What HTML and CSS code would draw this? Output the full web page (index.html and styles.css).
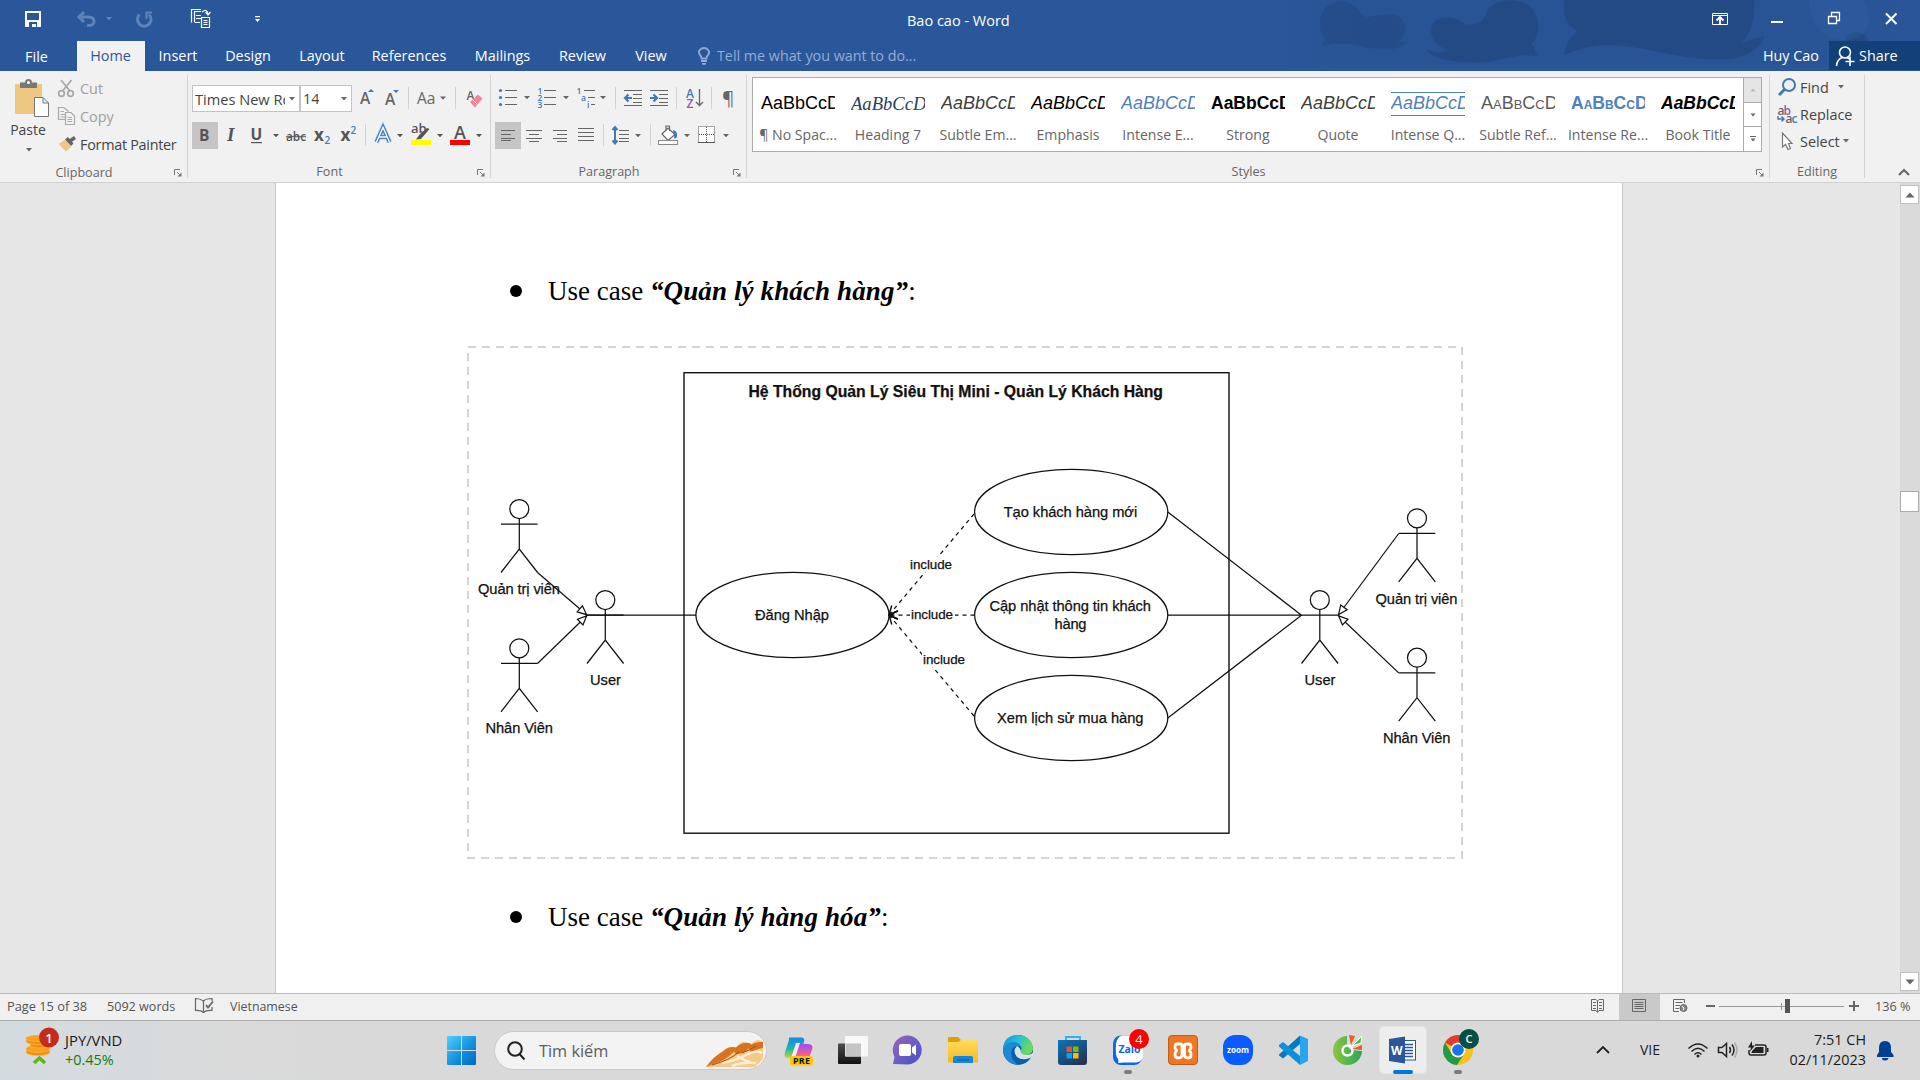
FILE: index.html
```html
<!DOCTYPE html>
<html lang="vi">
<head>
<meta charset="utf-8">
<title>Bao cao - Word</title>
<link rel="stylesheet" href="styles.css">
</head>
<body>
<header class="top">
  <svg class="pattern" viewBox="1280 0 640 65">
    <defs><linearGradient id="haze" x1="0" x2="1"><stop offset="0" stop-color="#254f8e" stop-opacity="0"/><stop offset=".12" stop-color="#254f8e" stop-opacity=".45"/><stop offset=".75" stop-color="#254f8e" stop-opacity=".4"/><stop offset="1" stop-color="#254f8e" stop-opacity=".15"/></linearGradient></defs>
    <rect x="1280" y="0" width="640" height="65" fill="url(#haze)"/>
    <g fill="#234a84">
      <path opacity=".7" d="M1320 48C1322 42 1326 41 1325 38C1317 30 1319 15 1325 8C1336-2 1352 0 1358 10C1362 14 1364 18 1369 17C1380 14 1402 10 1405 25C1406 34 1402 40 1398 42C1404 43 1408 40 1407 42C1400 51 1380 51 1360 46C1340 42 1328 43 1320 48Z"/>
      <path d="M1427 49C1434 53 1440 54 1447 50C1430 44 1430 30 1432 25C1436 15 1458 16 1466 25C1474 24 1482 25 1486 14C1492-3 1520-3 1531 7C1541 19 1540 34 1532 44L1538 57C1525 53 1512 57 1495 61C1470 65 1430 61 1427 49Z"/>
      <path d="M1564 0H1754C1756 20 1750 35 1741 43L1764 36C1764 44 1750 57 1730 59C1680 62 1650 46 1610 45C1590 45 1575 50 1564 55C1566 42 1571 37 1577 31C1562 22 1564 10 1564 0Z"/>
      <path d="M1845 41C1847 30 1866 29 1868 41Z"/>
    </g>
    <path d="M1809 0H1863C1876 20 1868 36 1850 40C1825 44 1808 22 1809 0Z" fill="#3261a5" opacity=".35"/>
  </svg>
  <div class="titlebar">
    <svg class="qat" viewBox="0 0 280 41">
      <path d="M25 11H41V27H25Z" fill="#fff"/><path d="M27 13H39V20H27ZM29 22H37V27H36V24H32V27H29Z" fill="#2a579a"/>
      <g fill="none" stroke="#5f82b8" stroke-width="3"><path d="M80 17H88Q94 17 94 21.5T87 25.500"/><path d="M84 12L79 17L84 22"/><path d="M139.500 14.500A6.800 6.800 0 1 0 149 14.500"/><path d="M152 12.500H146.500V19" stroke-width="2"/></g>
      <path d="M106 17H112L109 20.500Z" fill="#5f82b8"/>
      <g fill="none" stroke="#fff" stroke-width="1.200"><path d="M191.500 22.500V9.500H201M194.500 22V11.500H201M196 15.500H201M196 18.500H201M194.500 22.500H200M201.500 17.500H209.500V27.500H201.500ZM203.500 20.500H207.500M203.500 22.500H207.500M203.500 24.500H207.500"/><path d="M202 12Q207 8 208 14M205.500 12L208 15L210.500 12"/></g>
      <path d="M255 16H260V17.300H255ZM255 19H260L257.500 22Z" fill="#fff"/>
    </svg>
    <div class="doc-title">Bao cao - Word</div>
    <svg class="winctl" viewBox="1700 0 220 41" fill="none" stroke="#fff">
      <path d="M1712.500 13.500H1727.500V24.500H1712.500ZM1712.500 15.500H1727.500"/><path d="M1720 24V18M1716.500 20.500L1720 17L1723.500 20.500" stroke-width="1.800"/>
      <path d="M1771 22H1783" stroke-width="2"/><path d="M1828.500 16.500H1836.500V23.500H1828.500ZM1831.500 16V12.500H1839.500V20.500H1837" stroke-width="1.300"/><path d="M1886 13.500L1896.500 24M1896.500 13.500L1886 24" stroke-width="2"/>
    </svg>
  </div>
  <nav class="tabs">
    <span class="tab t-file">File</span><span class="tab t-home">Home</span><span class="tab t-insert">Insert</span><span class="tab t-design">Design</span><span class="tab t-layout">Layout</span><span class="tab t-ref">References</span><span class="tab t-mail">Mailings</span><span class="tab t-review">Review</span><span class="tab t-view">View</span>
    <svg class="bulb" viewBox="682 41 35 30" fill="none" stroke="#8fa9d0" stroke-width="1.800"><path d="M701.500 58.500Q701.500 56.500 700 55Q698 52 699.500 50.500Q701 48 704 48T708.500 50.500Q710 53 708 55Q706.500 56.500 706.500 58.500Z"/><path d="M701 61H707M702 63.800H706"/></svg>
    <span class="tell">Tell me what you want to do...</span>
    <span class="user">Huy Cao</span>
    <span class="share"><svg class="share-icon" viewBox="1829 41 30 29" fill="none" stroke="#fff" stroke-width="1.600"><circle cx="1845" cy="52.500" r="5.500"/><path d="M1836.500 66Q1837 59.500 1842 57.500M1847.500 57.500L1849 59M1850 56.500V66M1845.500 61.500H1854.500"/></svg>Share</span>
  </nav>
</header>

<section class="ribbon">
  <div class="group g-clip">
    <div class="g-body">
      <div class="paste">
        <svg class="paste-icon" viewBox="0 72 55 48"><path d="M15 84H42V114H15Z" fill="#eec881"/><path d="M20 88V82.500H25Q25 79 28.500 79T32 82.500H37V88Z" fill="#777"/><circle cx="28.500" cy="82.500" r="1.500" fill="#fff"/><path d="M34.500 97.500H43L48.500 103V116.500H34.500ZM43 97.500V103H48.500" fill="#fff" stroke="#777"/></svg>
        <span>Paste</span>
        <svg class="tiny" viewBox="0 0 8 6"><path d="M1 1H7L4 4.500Z" fill="#666"/></svg>
      </div>
      <div class="cmds">
        <div class="cmd dim"><svg class="i25" viewBox="55 75 25 28" fill="none" stroke="#a9a9a9" stroke-width="1.800"><path d="M61 80L70 91M71.500 80L62.500 91"/><circle cx="61.500" cy="93.500" r="2.800"/><circle cx="70.500" cy="93.500" r="2.800"/></svg>Cut</div>
        <div class="cmd dim"><svg class="i25" viewBox="55 103 25 28" fill="#f1f1f1" stroke="#a9a9a9" stroke-width="1.200"><path d="M58.500 107.500H64L68 111V119.500H58.500ZM60.500 111.500H64M60.500 114.500H65M60.500 117H65"/><path d="M65.500 112.500H71L74.500 116V124.500H65.500ZM67.500 117.500H72M67.500 119.500H72M67.500 121.500H72"/></svg>Copy</div>
        <div class="cmd"><svg class="i25" viewBox="55 131 25 28"><path d="M58.500 144L65 140L71 147L66 151.500Z" fill="#eec881"/><path d="M65 139.500L68 137L73.500 143.500L71 146Z" fill="#666"/><path d="M70 141L75 137.500" stroke="#666" stroke-width="3.500"/></svg><span class="painter">Format Painter</span></div>
      </div>
    </div>
    <div class="g-label">Clipboard<svg class="launch" viewBox="0 0 8 8"><path d="M.5 6V.5H6M3 3L6 6" fill="none" stroke="#777"/><path d="M7.500 3.500V7.500H3.500Z" fill="#777"/></svg></div>
  </div>

  <div class="group g-font">
    <div class="rows">
      <div class="row1">
        <div class="combo c-name"><span>Times New Roman</span><svg class="tiny" viewBox="0 0 8 6"><path d="M1 1H7L4 4.500Z" fill="#666"/></svg></div>
        <div class="combo c-size"><span>14</span><svg class="tiny" viewBox="0 0 8 6"><path d="M1 1H7L4 4.500Z" fill="#666"/></svg></div>
        <svg class="f1" viewBox="352 85 138 27" fill="#666">
          <text x="360" y="104" class="gi s15">A</text><path d="M368 92L371 89L374 92Z" fill="#4179b8"/>
          <text x="385" y="105" class="gi s15">A</text><path d="M393 90H399L396 93Z" fill="#4179b8"/>
          <path d="M408 87H409V109H408ZM455 87H456V109H455Z" fill="#d2d2d2"/>
          <text x="417" y="103.500" class="gr s15">Aa</text><path d="M440 96.500H446L443 99.800Z"/>
          <text x="466.500" y="100" class="gi s12">A</text><path d="M470 102L478 94.500L482.500 98.500L475 107.500Z" fill="#ee879b"/><path d="M472.500 99.500L477.500 104.500" stroke="#fff" stroke-width=".8"/>
        </svg>
      </div>
      <svg class="f2" viewBox="188 122 302 27" fill="#555">
        <rect x="192" y="122" width="26" height="27" fill="#c5c5c5"/>
        <text x="199" y="141" class="gb s15">B</text><text x="227" y="141" class="gs s18">I</text><text x="250.500" y="140" class="gb s15">U</text><path d="M251 142H262V143.200H251Z"/>
        <text x="286" y="141" class="gi s13" textLength="20" lengthAdjust="spacingAndGlyphs">abc</text><path d="M286 136.200H306V137.200H286Z"/>
        <text x="314" y="141" class="gb s16">x</text><text x="324.500" y="144" class="gi s10" fill="#4179b8">2</text>
        <text x="340.500" y="141" class="gb s16">x</text><text x="350.500" y="134" class="gi s10" fill="#4179b8">2</text>
        <path d="M365 124H366V146H365Z" fill="#d2d2d2"/>
        <path d="M376.500 142L383 127.500L389.500 142M379 137H387" fill="none" stroke="#9cc3ea" stroke-width="5"/><path d="M376.500 142L383 127.500L389.500 142M379 137H387" fill="none" stroke="#3b75b9" stroke-width="3.500"/><path d="M376.500 142L383 127.500L389.500 142M379 137H387" fill="none" stroke="#fff" stroke-width="1.400"/>
        <text x="411" y="133" class="gi s13">ab</text><path d="M429.500 129L421 139L416 139.500L420 134L427 128Z"/><rect x="411" y="140" width="20" height="5" fill="#ff0"/>
        <text x="454" y="138.500" class="gi s17">A</text><rect x="450" y="140" width="20" height="5" fill="#f00"/>
        <path d="M273 134H279L276 137.300ZM397 134H403L400 137.300ZM437 134H443L440 137.300ZM476 134H482L479 137.300Z"/>
      </svg>
    </div>
    <div class="g-label">Font<svg class="launch" viewBox="0 0 8 8"><path d="M.5 6V.5H6M3 3L6 6" fill="none" stroke="#777"/><path d="M7.500 3.500V7.500H3.500Z" fill="#777"/></svg></div>
  </div>

  <div class="group g-para">
    <div class="rows">
      <svg class="p1" viewBox="491 85 255 27" fill="#666">
        <g fill="#4179b8"><circle cx="500.500" cy="90.500" r="1.600"/><circle cx="500.500" cy="97.500" r="1.600"/><circle cx="500.500" cy="104.500" r="1.600"/></g>
        <path d="M505 90H517V91H505ZM505 97H517V98H505ZM505 104H517V105H505ZM544 90H556V91H544ZM544 97H556V98H544ZM544 104H556V105H544ZM584 90H595V91H584ZM588 97H595V98H588ZM591 104H595V105H591Z"/>
        <g class="gi s8" fill="#4179b8"><text x="537.500" y="93.500">1</text><text x="537.500" y="100.800">2</text><text x="537.500" y="108">3</text><text x="576.500" y="94">1</text><text x="581" y="101">a</text><text x="587" y="108">i</text></g>
        <path d="M524 96H530L527 99.300ZM563 96H569L566 99.300ZM600 96H606L603 99.300Z"/>
        <path d="M615 87H616V109H615ZM676 87H677V109H676ZM711 87H712V109H711Z" fill="#d2d2d2"/>
        <path d="M624 90H642V91H624ZM633 94H642V95H633ZM633 98H642V99H633ZM633 102H642V103H633ZM624 105H642V106H624ZM650 90H668V91H650ZM659 94H668V95H659ZM659 98H668V99H659ZM659 102H668V103H659ZM650 105H668V106H650Z"/>
        <path d="M632 98H625M628.500 94.500L625 98L628.500 101.500M650 98H657M653.500 94.500L657 98L653.500 101.500" fill="none" stroke="#4179b8" stroke-width="2.200"/>
        <text x="686" y="97.500" class="gi s12" fill="#4179b8">A</text><text x="686.500" y="107.500" class="gi s12" fill="#9359a8">Z</text><path d="M699.500 89V105M696 102L699.500 105.500L703 102" fill="none" stroke="#666" stroke-width="1.300"/>
        <text x="722" y="105" class="gr s19">¶</text>
      </svg>
      <svg class="p1" viewBox="491 122 255 27" fill="#666">
        <rect x="495" y="122" width="26" height="27" fill="#c5c5c5"/>
        <path d="M501 130H515V131H501ZM501 134H511V135H501ZM501 138H515V139H501ZM501 141H511V140H501ZM526 130H542V131H526ZM529 134H539V135H529ZM526 138H542V139H526ZM529 142H539V141H529ZM553 130H567V131H553ZM557 134H567V135H557ZM553 138H567V139H553ZM557 142H567V141H557ZM578 128H594V129H578ZM578 132H594V133H578ZM578 136H594V137H578ZM578 140H594V141H578ZM619 130H629V131H619ZM619 134H629V135H619ZM619 138H629V139H619ZM619 142H629V141H619Z"/>
        <path d="M603 124H604V146H603ZM650 124H651V146H650Z" fill="#d2d2d2"/>
        <path d="M615 128V142M612.500 130L615 127L617.500 130M612.500 140.500L615 143.500L617.500 140.500" fill="none" stroke="#4179b8" stroke-width="2"/>
        <path d="M635 134H641L638 137.300ZM684 134H690L687 137.300ZM723 134H729L726 137.300Z"/>
        <path d="M662 134L668 128L675 134.500L668 140.500ZM666 131V126H669.500V131" fill="#fff" stroke="#666" stroke-width="1.200"/><path d="M673 130Q678 131 677 137L674.500 139Z" fill="#4179b8"/><rect x="658.500" y="140.500" width="19" height="4" fill="#fff" stroke="#888"/>
        <rect x="698.500" y="126.500" width="16" height="16" fill="#fff" stroke="#555" stroke-dasharray="1 1"/><path d="M706.500 127V142M699 134.500H714" stroke="#555" stroke-dasharray="1 1"/><path d="M698 142.500H715" stroke="#555"/>
      </svg>
    </div>
    <div class="g-label">Paragraph<svg class="launch" viewBox="0 0 8 8"><path d="M.5 6V.5H6M3 3L6 6" fill="none" stroke="#777"/><path d="M7.500 3.500V7.500H3.500Z" fill="#777"/></svg></div>
  </div>

  <div class="group g-styles">
    <div class="gallery">
      <div class="style"><div class="sample">AaBbCcD</div><div class="sname">¶ No Spac...</div></div>
      <div class="style"><div class="sample s-head">AaBbCcDd</div><div class="sname">Heading 7</div></div>
      <div class="style"><div class="sample s-it s-grey">AaBbCcD</div><div class="sname">Subtle Em...</div></div>
      <div class="style"><div class="sample s-it">AaBbCcD</div><div class="sname">Emphasis</div></div>
      <div class="style"><div class="sample s-it s-blue">AaBbCcD</div><div class="sname">Intense E...</div></div>
      <div class="style"><div class="sample s-bold">AaBbCcD</div><div class="sname">Strong</div></div>
      <div class="style"><div class="sample s-it s-grey">AaBbCcD</div><div class="sname">Quote</div></div>
      <div class="style"><div class="sample s-it s-blue s-lines">AaBbCcD</div><div class="sname">Intense Q...</div></div>
      <div class="style"><div class="sample s-caps s-grey2">AaBbCcD</div><div class="sname">Subtle Ref...</div></div>
      <div class="style"><div class="sample s-caps s-bold s-blue">AaBbCcD</div><div class="sname">Intense Re...</div></div>
      <div class="style"><div class="sample s-it s-bold">AaBbCcD</div><div class="sname">Book Title</div></div>
      <div class="gbtns">
        <div class="gbtn off"><svg class="tiny" viewBox="0 0 8 6"><path d="M1.500 4.500H6.500L4 1.500Z" fill="#bbb"/></svg></div>
        <div class="gbtn"><svg class="tiny" viewBox="0 0 8 6"><path d="M1.500 1.500H6.500L4 4.500Z" fill="#666"/></svg></div>
        <div class="gbtn"><svg class="tiny" viewBox="0 0 8 6"><path d="M1 0H7V1H1ZM1.500 2.500H6.500L4 5.500Z" fill="#666"/></svg></div>
      </div>
    </div>
    <div class="g-label">Styles<svg class="launch" viewBox="0 0 8 8"><path d="M.5 6V.5H6M3 3L6 6" fill="none" stroke="#777"/><path d="M7.500 3.500V7.500H3.500Z" fill="#777"/></svg></div>
  </div>

  <div class="group g-edit">
    <div class="cmds">
      <div class="cmd"><svg class="i30" viewBox="1770 74 30 27" fill="none" stroke="#4179b8"><circle cx="1789" cy="85" r="6" stroke-width="2"/><path d="M1784.500 89.500L1779 95" stroke-width="3"/></svg>Find<svg class="tiny ml11" viewBox="0 0 8 6"><path d="M1 0H7L4 3.500Z" fill="#666"/></svg></div>
      <div class="cmd"><svg class="i30" viewBox="1770 101 30 27"><g class="gi s12"><text x="1777.500" y="114.500" fill="#666">a</text><text x="1783.500" y="114.500" fill="#9359a8">b</text><text x="1785.500" y="123" fill="#666">a</text><text x="1791.500" y="123" fill="#4179b8">c</text></g><path d="M1778 116V119H1784M1781.500 116.500L1784 119L1781.500 121.500" fill="none" stroke="#4179b8" stroke-width="1.500"/></svg>Replace</div>
      <div class="cmd"><svg class="i30" viewBox="1770 128 30 27"><path d="M1782.500 133V147L1785.500 144.500L1788 149.500L1790.500 148.500L1788.500 143.500H1792Z" fill="#fff" stroke="#777" stroke-width="1.200"/></svg>Select<svg class="tiny ml3" viewBox="0 0 8 6"><path d="M1 0H7L4 3.500Z" fill="#666"/></svg></div>
    </div>
    <div class="g-label">Editing</div>
  </div>
  <svg class="collapse" viewBox="0 0 12 8"><path d="M1 7L6 2L11 7" fill="none" stroke="#666" stroke-width="2"/></svg>
</section>

<main class="work">
  <article class="page">
    <h2 class="bullet"><span class="dot"></span><span class="line">Use case <b>“Quản lý khách hàng”</b>:</span></h2>
    <svg class="diagram" viewBox="467 346 997 514">
      <defs>
        <marker id="tri" viewBox="0 0 11 10" refX="10.500" refY="5" markerWidth="11" markerHeight="10" markerUnits="userSpaceOnUse" orient="auto"><path d="M1 1L10 5L1 9Z" fill="#fff" stroke="#111" stroke-width="1.200"/></marker>
        <marker id="open" viewBox="0 0 11 10" refX="10" refY="5" markerWidth="11" markerHeight="10" markerUnits="userSpaceOnUse" orient="auto"><path d="M1 1L10 5L1 9" fill="none" stroke="#111" stroke-width="1.500"/></marker>
        <g id="man"><circle r="9.500"/><path d="M0 9.500V40M-18.300 15.200H18.300M-18.300 63.500L0 40L18.300 63.500"/></g>
      </defs>
      <rect x="468" y="347" width="994" height="511" fill="none" stroke="#d4d4d4" stroke-width="2" stroke-dasharray="8 6"/>
      <g fill="none" stroke="#111" stroke-width="1.250">
        <rect x="684" y="372.700" width="545" height="460.500" stroke-width="1.400"/>
        <use href="#man" x="519.300" y="509"/><use href="#man" x="519.300" y="648.300"/><use href="#man" x="605.300" y="600"/>
        <use href="#man" x="1319.800" y="600"/><use href="#man" x="1417" y="518.300"/><use href="#man" x="1417" y="657.700"/>
        <path d="M587 615.200H696M1167.800 512L1301.500 615.200L1167.800 718M1167.800 615.200H1301.500"/>
        <ellipse cx="792.500" cy="615" rx="96.600" ry="42.600"/><ellipse cx="1071.200" cy="512" rx="96.600" ry="42.600"/><ellipse cx="1071.200" cy="615" rx="96.600" ry="42.600"/><ellipse cx="1071.200" cy="718" rx="96.600" ry="42.600"/>
        <g marker-end="url(#tri)"><path d="M537.500 572.500L587 615"/><path d="M537.500 663.500L587 615.500"/><path d="M1398.700 533.500L1338.300 615"/><path d="M1398.700 672.900L1338.300 615.500"/></g>
        <g stroke-dasharray="4 4" marker-end="url(#open)"><path d="M974 514L889 615"/><path d="M974.500 615H889"/><path d="M974 716L889 615"/></g>
        <circle cx="891" cy="615" r="2.500" fill="#111" stroke="none"/>
      </g>
      <g fill="#fff"><rect x="909" y="557" width="44" height="15"/><rect x="910" y="607" width="45" height="15"/><rect x="922" y="652" width="44" height="15"/></g>
      <g class="dt">
        <text class="dtitle" x="748.500" y="396.700" textLength="414.500" lengthAdjust="spacingAndGlyphs">Hệ Thống Quản Lý Siêu Thị Mini - Quản Lý Khách Hàng</text>
        <text x="478" y="594" textLength="82">Quản trị viên</text><text x="485.500" y="733" textLength="67.500">Nhân Viên</text><text x="590" y="684.700" textLength="31">User</text>
        <text x="755" y="619.500" textLength="74">Đăng Nhập</text>
        <text x="1003.700" y="516.700" textLength="133.500">Tạo khách hàng mới</text>
        <text x="989.500" y="611" textLength="161.500">Cập nhật thông tin khách</text><text x="1054.500" y="629.300" textLength="32">hàng</text>
        <text x="997" y="722.500" textLength="146.500">Xem lịch sử mua hàng</text>
        <text x="1304.500" y="684.700" textLength="31">User</text><text x="1375.500" y="603.500" textLength="82">Quản trị viên</text><text x="1383" y="743" textLength="67.500">Nhân Viên</text>
        <g class="inc"><text x="910" y="568.600" textLength="42">include</text><text x="911" y="619.300" textLength="42">include</text><text x="923" y="664.300" textLength="42">include</text></g>
      </g>
    </svg>
    <h2 class="bullet"><span class="dot"></span><span class="line">Use case <b>“Quản lý hàng hóa”</b>:</span></h2>
  </article>
  <div class="scroll">
    <div class="sbtn"><svg class="arrow" viewBox="0 0 10 6"><path d="M.5 5.500H9.500L5 .5Z" fill="#666"/></svg></div>
    <div class="thumb"></div>
    <div class="sbtn"><svg class="arrow" viewBox="0 0 10 6"><path d="M.5 .5H9.500L5 5.500Z" fill="#666"/></svg></div>
  </div>
</main>

<footer class="status">
  <span class="st-page">Page 15 of 38</span><span class="st-words">5092 words</span>
  <svg class="st-book" viewBox="190 994 40 26" fill="none" stroke="#666" stroke-width="1.200"><path d="M203.500 1001Q200 998.500 195.500 998.500V1010.500Q201 1010 203.500 1012.500Q206 1010 212 1010.500V1007M203.500 1012V1001Q206 998.500 212 998.500V1001"/><path d="M206 1005L208 1007.500L213 1001.500" stroke-width="1.800"/></svg>
  <span class="st-lang">Vietnamese</span>
  <svg class="st-right" viewBox="1580 994 290 26" fill="none" stroke="#666">
    <path d="M1591.500 999.500H1596L1597.500 1001L1599 999.500H1603.500V1010.500H1599L1597.500 1012.500L1596 1010.500H1591.500ZM1597.500 1001V1012M1593 1002.500H1596M1593 1005.500H1596M1593 1008.500H1596M1599 1002.500H1602M1599 1005.500H1602M1599 1008.500H1602"/>
    <rect x="1619" y="994" width="41" height="26" fill="#c9c9c9" stroke="none"/><path d="M1632.500 999.500H1645.500V1011.500H1632.500ZM1634.500 1002.500H1643.500M1634.500 1004.500H1643.500M1634.500 1006.500H1643.500M1634.500 1008.500H1643.500"/>
    <path d="M1684.500 1003V999.500H1673.500V1011.500H1679M1675.500 1002.500H1682.500M1675.500 1005.500H1680M1675.500 1008.500H1679"/><circle cx="1683.500" cy="1008" r="3.500" fill="#888"/><path d="M1681.500 1006L1684 1008L1683 1010.500" stroke="#f0f0f0"/>
    <path d="M1706 1006H1715M1849 1006H1859M1854 1001V1011" stroke-width="2"/><path d="M1719 1006.500H1844M1781.500 1003V1010" stroke="#999"/><rect x="1785" y="999" width="5" height="14" fill="#555" stroke="none"/>
  </svg>
  <span class="st-zoom">136 %</span>
</footer>

<div class="taskbar">
  <div class="widget">
    <svg class="coins" viewBox="0 1021 65 59">
      <g stroke="#fbb040" stroke-width="1"><ellipse cx="38" cy="1052" rx="12" ry="3.500" fill="#f08c10"/><ellipse cx="38" cy="1049" rx="12" ry="3.500" fill="#f9a11b"/><ellipse cx="40" cy="1045" rx="10" ry="3" fill="#f08c10"/><ellipse cx="37" cy="1041" rx="11" ry="3.500" fill="#f08c10"/><ellipse cx="37" cy="1038.500" rx="11" ry="3" fill="#f9a11b"/></g>
      <path d="M34 1063L39.500 1058L45 1063" fill="none" stroke="#5cb615" stroke-width="3.500"/><circle cx="49" cy="1037.500" r="10" fill="#c42b1c"/><text x="45.300" y="1042.500" class="gi s13" fill="#fff">1</text>
    </svg>
    <div class="fx"><div class="fx-name">JPY/VND</div><div class="fx-up">+0.45%</div></div>
  </div>
  <svg class="start" viewBox="434 1021 60 59"><defs><linearGradient id="win" x1="0" y1="0" x2="1" y2="1"><stop offset="0" stop-color="#4fd0ff"/><stop offset=".55" stop-color="#1590e0"/><stop offset="1" stop-color="#0067c5"/></linearGradient></defs><path d="M447 1037Q447 1036 448 1036H461V1050H447ZM462 1036H475Q476 1036 476 1037V1050H462ZM447 1051H461V1065H448Q447 1065 447 1064ZM462 1051H476V1064Q476 1065 475 1065H462Z" fill="url(#win)"/></svg>
  <div class="search">
    <svg class="mag" viewBox="494 1031 46 38" fill="none" stroke="#222" stroke-width="2"><circle cx="516" cy="1048" r="6.800"/><path d="M520.500 1053L525.500 1058.500"/></svg>
    <span>Tìm kiếm</span>
    <svg class="pastry" viewBox="704 1031 62 37"><path d="M706 1066Q716 1054 722 1052Q728 1043 736 1047Q742 1037 750 1044Q758 1036 763 1041V1058L755 1066Z" fill="#f6c98a"/><path d="M706 1066Q714 1055 722 1051Q730 1044 737 1047Q729 1057 719 1061ZM733 1050Q738 1043 744 1042Q750 1041 752 1044Q744 1054 736 1053ZM749 1047Q752 1040 763 1041V1047Q755 1048 751 1053Z" fill="#d87420"/><path d="M722 1062Q735 1060 746 1054T762 1052M732 1065Q742 1061 756 1062M737 1055Q745 1060 752 1062" fill="none" stroke="#fff0d2" stroke-width="2.500"/><path d="M712 1064Q730 1059 739 1051M742 1052Q750 1049 756 1045" fill="none" stroke="#a94a10" stroke-width="1"/></svg>
  </div>
  <svg class="apps" viewBox="767 1021 722 59">
    <defs>
      <linearGradient id="ca" x1="0" y1="0" x2="0" y2="1"><stop offset="0" stop-color="#1487e8"/><stop offset=".55" stop-color="#22b6a6"/><stop offset="1" stop-color="#c5d43a"/></linearGradient>
      <linearGradient id="cb" x1="0" y1="0" x2="0" y2="1"><stop offset="0" stop-color="#9b4df0"/><stop offset=".6" stop-color="#ef5a9c"/><stop offset="1" stop-color="#f79048"/></linearGradient>
      <linearGradient id="chat" x1="0" y1="0" x2="1" y2="1"><stop offset="0" stop-color="#9a62b5"/><stop offset=".5" stop-color="#6a5fc8"/><stop offset="1" stop-color="#4950c0"/></linearGradient>
      <linearGradient id="fold" x1="0" y1="0" x2="0" y2="1"><stop offset="0" stop-color="#ffdb62"/><stop offset="1" stop-color="#f8b91f"/></linearGradient>
      <linearGradient id="eg" x1="0" x2="1" y2=".4"><stop offset="0" stop-color="#168bd3"/><stop offset=".5" stop-color="#24c0da"/><stop offset="1" stop-color="#6cdc55"/></linearGradient>
      <linearGradient id="store" x1="0" y1="0" x2=".7" y2="1"><stop offset="0" stop-color="#0877bd"/><stop offset="1" stop-color="#243457"/></linearGradient>
      <linearGradient id="tv" x1="0" y1="0" x2="0" y2="1"><stop offset="0" stop-color="#4c4c4c"/><stop offset="1" stop-color="#111"/></linearGradient>
      <linearGradient id="coc" x1="0" x2="1"><stop offset="0" stop-color="#8cc63f"/><stop offset="1" stop-color="#28a75a"/></linearGradient>
    </defs>
    <path d="M789 1037.500H802Q805 1038 804 1042L798 1058H789Q783 1058 785 1052L789 1040Z" fill="url(#ca)"/><path d="M799 1044H808Q814 1044 812 1050L808 1060H793L798 1047Z" fill="url(#cb)"/><path d="M796 1043H800L795 1058H791Z" fill="#f3f0f5"/><rect x="790" y="1056" width="23" height="9.500" rx="2.500" fill="#ffc60b"/><text x="793" y="1064" class="gb s9" fill="#111" textLength="17">PRE</text>
    <rect x="838" y="1043.500" width="23" height="20.500" rx="1" fill="url(#tv)"/><rect x="845" y="1036" width="23" height="20.500" rx="1" fill="#f8f8f8"/><rect x="845.500" y="1043.500" width="15.500" height="13" fill="#c4c4c4"/>
    <path d="M893 1064L894.500 1057A14.500 14.500 0 1 1 908 1064.500Z" fill="url(#chat)"/><rect x="899" y="1044" width="12" height="12" rx="2" fill="#fff"/><path d="M912 1047.500L916 1044.500V1055.500L912 1052.500Z" fill="#fff"/>
    <path d="M948 1038Q948 1037 949 1037H958L961 1040H977Q978 1040 978 1041V1048H948Z" fill="#e0a100"/><path d="M948 1042H958L961 1040H977Q978 1040 978 1041V1062.500H948Z" fill="url(#fold)"/><path d="M953 1063V1058Q953 1056 955 1056H971Q973 1056 973 1058V1063Z" fill="#1487dd"/><path d="M957 1060H969" stroke="#0b5fa8" stroke-width="1.200"/>
    <circle cx="1018" cy="1050" r="15" fill="#0b5ea8"/><path d="M1003 1049Q1004 1035 1018 1035Q1032 1036 1033 1049Q1032 1055 1025 1055Q1019 1054 1021 1050Q1023 1046 1017 1045Q1012 1045 1010 1050Q1004 1054 1003 1049Z" fill="url(#eg)"/><path d="M1003 1049Q1006 1042 1014 1042Q1019 1042 1021 1046Q1011 1045 1011 1054Q1012 1062 1019 1065Q1004 1064 1003 1049Z" fill="#1a8ad6"/><path d="M1017 1046Q1012 1051 1017 1057Q1022 1061 1030 1058L1033 1056L1033 1053Q1026 1057 1021 1053Q1021 1048 1017 1046Z" fill="#d9e2e8"/>
    <path d="M1066 1041V1037H1080V1041" fill="none" stroke="#2fb5ec" stroke-width="2"/><path d="M1058 1040H1087V1062Q1087 1065 1084 1065H1061Q1058 1065 1058 1062Z" fill="url(#store)"/><path d="M1066.500 1046.500H1072V1052H1066.500Z" fill="#f25022"/><path d="M1073 1046.500H1078.500V1052H1073Z" fill="#7fba00"/><path d="M1066.500 1053H1072V1058.500H1066.500Z" fill="#00a4ef"/><path d="M1073 1053H1078.500V1058.500H1073Z" fill="#ffb900"/>
    <rect x="1113" y="1035.500" width="29" height="29.500" rx="8" fill="#0866ef"/><path d="M1122 1035.500H1136Q1143 1036 1143 1043V1054Q1143 1062 1136 1062.500H1124L1118 1063Q1119 1061 1118 1059Q1115 1056 1116 1044Q1117 1037 1122 1035.500Z" fill="#fff"/><text x="1118.500" y="1053" class="gb s11" fill="#0866ef" textLength="22" lengthAdjust="spacingAndGlyphs">Zalo</text><circle cx="1139" cy="1039" r="10" fill="#f00"/><text x="1135.200" y="1043.800" class="gr s13" fill="#fff">4</text><rect x="1124" y="1070" width="8" height="4" rx="2" fill="#7c7c7c"/>
    <rect x="1168.500" y="1035.500" width="29" height="29" rx="3.500" fill="#ef7622" stroke="#c45b12"/><path d="M1177 1044H1180Q1182 1044 1182 1046V1049H1184.500V1046Q1184.500 1044 1186.500 1044H1188.500Q1191 1044 1191 1047Q1191 1050 1188.500 1050.500Q1191 1051 1191 1054.500Q1191 1058 1188.500 1058Q1184.500 1058 1184.500 1055V1052H1182V1055Q1182 1058 1178 1058Q1175 1058 1175 1054.500Q1175 1051 1177.500 1050.500Q1175 1050 1175 1047Q1175 1044 1177 1044Z" fill="none" stroke="#fff" stroke-width="2.800"/>
    <rect x="1223" y="1035" width="30" height="30" rx="12" fill="#0b5cff"/><text x="1227" y="1052.500" class="gb s9" fill="#fff" textLength="22" lengthAdjust="spacingAndGlyphs">zoom</text>
    <path d="M1300 1035.500L1308 1039V1061L1300 1065Z" fill="#27a5ef"/><path d="M1300 1035.500V1044L1283 1058.500L1279 1055.500V1054.500Z" fill="#0879c0"/><path d="M1300 1065V1056L1283 1042L1279 1045V1046.500Z" fill="#0b91d8"/>
    <path d="M1347 1036A14.500 14.500 0 1 0 1362 1051L1351 1050L1347 1046Z" fill="url(#coc)"/><circle cx="1347.500" cy="1050.500" r="5" fill="none" stroke="#fff" stroke-width="2.500"/><path d="M1349 1035L1351 1045L1355 1036Z" fill="#f1592a"/><path d="M1362 1036L1352 1046L1361 1043Z" fill="#5ebb46" stroke="#fff"/><path d="M1352 1049L1362 1045V1050Z" fill="#f1592a"/>
    <rect x="1379.500" y="1026.500" width="47" height="47" rx="4" fill="#ededed" stroke="#e3e3e3"/><rect x="1402" y="1040.500" width="13.500" height="19.500" fill="#fff" stroke="#2a579a"/><path d="M1405 1044.500H1413M1405 1047.500H1413M1405 1050.500H1413M1405 1053.500H1413M1405 1056.500H1413" stroke="#2a579a" stroke-width="1.300"/><path d="M1389 1039L1405 1036.500V1063.500L1389 1061Z" fill="#2a579a"/><text x="1391" y="1054.500" class="gb s12" fill="#fff" textLength="12">W</text><rect x="1393" y="1070" width="20" height="4" rx="2" fill="#0078d4"/>
    <circle cx="1458" cy="1050" r="15" fill="#fbc116"/><path d="M1458 1050L1445 1042.500A15 15 0 0 1 1471 1042.500Z" fill="#e33b2e"/><path d="M1458 1050L1471 1042.500H1457Z" fill="#e33b2e"/><path d="M1445 1042.500A15 15 0 0 0 1457 1065L1464.500 1053.500L1451.500 1053.500Z" fill="#229a45"/><circle cx="1458" cy="1050" r="7.500" fill="#fff"/><circle cx="1458" cy="1050" r="5.800" fill="#1a73e8"/><circle cx="1469" cy="1039" r="10" fill="#064f44"/><text x="1465.500" y="1043" class="gi s11" fill="#fff">C</text><rect x="1454" y="1070" width="8" height="4" rx="2" fill="#7c7c7c"/>
  </svg>
  <svg class="tray-up" viewBox="1570 1021 60 59"><path d="M1597 1053L1603 1047L1609 1053" fill="none" stroke="#222" stroke-width="1.800"/></svg>
  <span class="lang">VIE</span>
  <svg class="tray" viewBox="1670 1021 110 59" fill="none" stroke="#222" stroke-width="1.500">
    <path d="M1688.500 1048.500Q1698 1039.500 1707.500 1048.500M1691.500 1051.500Q1698 1045 1704.500 1051.500M1694.500 1054.500Q1698 1051 1701.500 1054.500"/><circle cx="1698" cy="1056" r="1.500" fill="#222" stroke="none"/>
    <path d="M1718.500 1047.500H1722L1726.500 1043.500V1056.500L1722 1052.500H1718.500Z"/><path d="M1729.500 1047Q1731.500 1050 1729.500 1053M1732 1044.500Q1736 1050 1732 1055.500"/><path d="M1734.500 1042.500Q1739.500 1050 1734.500 1057.500" stroke="#aaa"/>
    <path d="M1755 1045H1764Q1766 1045 1766 1047V1053Q1766 1055 1764 1055H1751Q1749 1055 1749 1053V1050" /><path d="M1752 1051L1756 1047H1763.500V1053H1751.500Z" fill="#222" stroke="none"/><path d="M1767 1048H1768.500V1052H1767Z" fill="#222" stroke="none"/><path d="M1752 1041L1748 1047.500H1751L1750 1051.500L1755 1045.500H1752Z" fill="#222" stroke="none"/>
  </svg>
  <div class="clock"><div>7:51 CH</div><div>02/11/2023</div></div>
  <svg class="bell" viewBox="1866 1021 54 59"><path d="M1877 1057V1055L1879 1052V1048Q1879 1041 1885 1041T1891 1048V1052L1893.500 1055V1057ZM1882 1058H1888.500Q1888 1060.500 1885 1060.500T1882 1058Z" fill="#003e92"/></svg>
</div>
</body>
</html>
```
FILE: styles.css
```css
* { box-sizing: border-box; }
body { margin: 0; width: 1920px; height: 1080px; overflow: hidden; display: flex; flex-direction: column; font-family: "Open Sans", "Noto Sans", sans-serif; font-size: 14.4px; color: #444; background: #e6e6e6; }
svg { display: block; flex: none; }
span { white-space: nowrap; }

/* glyph styles used inside icons */
.gr { font-family: "Open Sans", sans-serif; }
.gi { font-family: "Open Sans", sans-serif; font-weight: 600; }
.gb { font-family: "Open Sans", sans-serif; font-weight: 700; }
.gs { font-family: "Liberation Serif", serif; font-weight: 700; font-style: italic; }
.s8 { font-size: 8.5px; } .s9 { font-size: 9px; } .s10 { font-size: 10px; } .s11 { font-size: 11px; } .s12 { font-size: 12px; } .s13 { font-size: 13px; }
.s15 { font-size: 15.5px; } .s16 { font-size: 17px; } .s17 { font-size: 18px; } .s18 { font-size: 19px; } .s19 { font-size: 19px; }

.top { position: relative; height: 71px; background: #2a579a; color: #fff; flex: none; }
.pattern { position: absolute; right: 0; top: 0; width: 640px; height: 65px; }
.titlebar { position: relative; height: 41px; display: flex; justify-content: space-between; }
.qat { width: 280px; height: 41px; }
.doc-title { flex: 1; padding-left: 627px; line-height: 41px; font-size: 14.5px; }
.winctl { width: 220px; height: 41px; }
.tabs { position: relative; height: 30px; display: flex; line-height: 29px; font-size: 14.4px; }
.tab { text-align: center; }
.t-file { width: 77px; padding-right: 4px; padding-top: 1px; }
.t-home { width: 68px; background: #f1f1f1; color: #2a579a; padding-right: 1px; }
.t-insert { width: 66px; }
.t-design { width: 75px; padding-right: 1px; }
.t-layout { width: 72px; }
.t-ref { width: 102px; }
.t-mail { width: 85px; }
.t-review { width: 75px; }
.t-view { width: 62px; }
.bulb { width: 35px; height: 30px; }
.tell { color: #94add2; font-size: 14.3px; }
.user { margin-left: auto; padding-right: 10px; }
.share { width: 91px; height: 29px; background: #124078; display: flex; }
.share-icon { width: 30px; height: 29px; }

.ribbon { height: 112px; background: #f1f1f1; border-bottom: 1px solid #d2d2d2; display: flex; flex: none; }
.group { position: relative; display: flex; flex-direction: column; justify-content: space-between; margin: 4px 0; height: 103px; border-right: 1px solid #d4d4d4; }
.g-label { height: 20px; line-height: 28px; font-size: 12.6px; text-align: center; color: #666; padding-right: 19px; }
.launch { position: absolute; right: 5px; bottom: 1px; width: 8px; height: 8px; }
.tiny { width: 8px; height: 6px; }
.g-clip { width: 188px; }
.g-body { display: flex; }
.paste { width: 55px; display: flex; flex-direction: column; align-items: center; }
.paste-icon { width: 55px; height: 48px; margin-top: -3px; }
.paste span { line-height: 19px; padding-left: 1px; font-size: 14px; }
.paste .tiny { margin-top: 8px; margin-left: 3px; }
.cmds { display: flex; flex-direction: column; }
.cmd { height: 28px; line-height: 28px; display: flex; }
.dim { color: #a0a0a0; }
.painter { font-size: 14.4px; letter-spacing: -0.28px; }
.i25 { width: 25px; height: 28px; }
.i30 { width: 30px; height: 27px; }
.g-font { width: 303px; }
.rows { display: flex; flex-direction: column; gap: 10px; padding-top: 10px; }
.row1 { display: flex; padding-left: 4px; }
.combo { height: 27px; background: #fff; border: 1px solid #c3c3c3; display: flex; align-items: center; justify-content: space-between; padding: 0 3px 0 2px; }
.combo span { overflow: hidden; line-height: 24px; }
.c-name { width: 108px; }
.c-name span { width: 90px; font-size: 14.6px; }
.c-size { width: 52px; }
.f1 { width: 138px; height: 27px; }
.f2 { width: 302px; height: 27px; }
.g-para { width: 256px; }
.p1 { width: 255px; height: 27px; }
.g-styles { width: 1023px; }
.gallery { margin: 2px 7px 0 5px; height: 75px; width: 1010px; background: #fff; border: 1px solid #ababab; display: flex; }
.style { width: 90px; flex: none; padding: 14px 8px 0; }
.sample { height: 24px; width: 74px; overflow: hidden; font: 18px/23px "Liberation Sans", Arial, sans-serif; color: #000; white-space: nowrap; }
.s-head { font-family: "Liberation Serif", serif; font-size: 18.6px; font-style: italic; color: #243f60; }
.s-it { font-style: italic; }
.s-bold { font-weight: 700; font-size: 17.5px; }
.s-grey { color: #404040; }
.s-grey2 { color: #5a5a5a; }
.s-blue { color: #4f81bd; }
.s-caps { font-variant: small-caps; }
.s-lines { border-top: 1px solid #4f81bd; border-bottom: 1px solid #4f81bd; line-height: 21px; }
.sname { margin: 9px -8px 0; text-align: center; line-height: 20px; color: #666; font-size: 14.1px; white-space: nowrap; }
.gbtns { width: 18px; display: flex; flex-direction: column; border-left: 1px solid #ababab; }
.gbtn { flex: 1; display: flex; align-items: center; justify-content: center; border-bottom: 1px solid #ababab; }
.gbtn:last-child { border-bottom: 0; }
.off { background: #e5e5e5; }
.g-edit { width: 95px; }
.g-edit .cmd { height: 27px; line-height: 27px; align-items: center; }
.g-edit .cmds { margin-top: -1px; }
.g-edit .g-label { padding-right: 0; }
.ml11 { margin-left: 8px; } .ml3 { margin-left: 2px; }
.collapse { width: 12px; height: 8px; margin: 97px 0 0 33px; }

.work { flex: 1; display: flex; justify-content: space-between; min-height: 0; }
.page { margin-left: 275px; width: 1348px; background: #fff; border: 1px solid #c6c6c6; border-width: 0 1px; padding-top: 88px; overflow: hidden; }
.bullet { margin: 0; height: 40px; padding-left: 234px; display: flex; align-items: center; font: 27px/40px "Liberation Serif", "Times New Roman", serif; color: #000; }
.bullet .line { padding-bottom: 1px; }
.bullet b { font-style: italic; letter-spacing: .12px; }
.dot { width: 12px; height: 12px; border-radius: 6px; background: #000; margin-right: 26px; }
.diagram { width: 997px; height: 514px; margin: 35px 0 37px 191px; }
.dt { font-family: "Liberation Sans", Arial, sans-serif; font-size: 14.7px; fill: #111; stroke: #111; stroke-width: .25; }
.dtitle { font-weight: 700; font-size: 15.6px; }
.inc { font-size: 13.4px; }
.scroll { width: 20px; background: #dadada; padding: 2px 1px 2px 0; display: flex; flex-direction: column; }
.sbtn { height: 19px; background: #fff; border: 1px solid #c0c0c0; display: flex; align-items: center; justify-content: center; }
.arrow { width: 10px; height: 6px; }
.thumb { height: 21px; margin: 287px 0 auto; background: #fff; border: 1px solid #ababab; }

.status { height: 28px; flex: none; background: #f0f0f0; border-top: 1px solid #bcbcbc; border-bottom: 1px solid #adadad; display: flex; font-size: 12.4px; line-height: 25px; color: #555; }
.st-page { width: 107px; padding-left: 7px; font-size: 12.8px; }
.st-words { width: 83px; font-size: 12.6px; }
.st-book { width: 40px; height: 26px; }
.st-right { width: 290px; height: 26px; margin-left: auto; }
.st-zoom { width: 50px; padding-left: 5px; font-size: 12.7px; }

.taskbar { height: 59px; flex: none; display: flex; background: linear-gradient(90deg, #d3dbe0, #d9dadb 200px, #d9d9d9 400px); color: #1b1b1b; }
.widget { width: 434px; display: flex; }
.coins { width: 65px; height: 59px; }
.fx { padding-top: 9px; line-height: 20px; font-size: 14.8px; }
.fx-up { color: #107c10; font-size: 14.4px; }
.start { width: 60px; height: 59px; }
.search { width: 273px; height: 39px; margin-top: 10px; border-radius: 20px; background: #f3f3f3; border: 1px solid #c9c9c9; display: flex; align-items: center; font-size: 16.3px; color: #5c5c5c; }
.mag { width: 46px; height: 38px; margin-left: -2px; }
.pastry { width: 62px; height: 37px; margin-left: auto; }
.apps { width: 722px; height: 59px; }
.tray-up { width: 60px; height: 59px; margin-left: auto; }
.lang { width: 40px; text-align: center; line-height: 58px; font-size: 14px; }
.tray { width: 110px; height: 59px; }
.clock { width: 86px; text-align: right; padding-top: 9px; line-height: 20px; font-size: 14.4px; }
.bell { width: 54px; height: 59px; }
```
